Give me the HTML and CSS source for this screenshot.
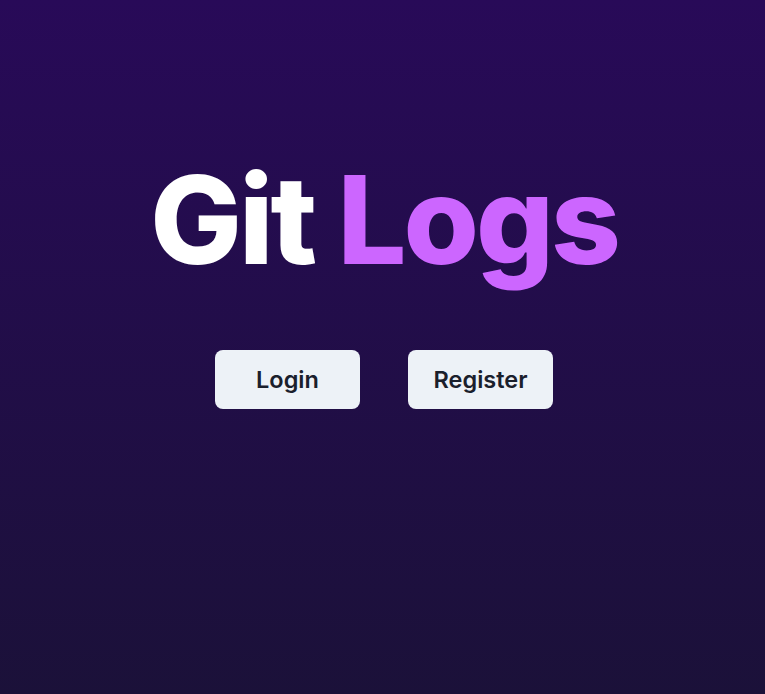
FILE: index.html
```html
<!DOCTYPE html>
<html lang="en">
<head>
<meta charset="utf-8">
<title>Git Logs</title>
<link rel="stylesheet" href="styles.css">
</head>
<body>
<main class="page">
  <h1 class="title">Git <span class="accent">Logs</span></h1>
  <div class="actions">
    <button class="btn">Login</button>
    <button class="btn">Register</button>
  </div>
</main>
</body>
</html>
```
FILE: styles.css
```css
* { box-sizing: border-box; }
html, body { margin: 0; height: 100%; }
body {
  font-family: Inter, "Noto Sans", sans-serif;
  background: linear-gradient(to bottom, #280a58, #1b1139);
  min-height: 694px;
}
.page {
  display: flex;
  flex-direction: column;
  align-items: center;
  padding-top: 150px;
  padding-left: 3px;
}
.title {
  margin: 0;
  font-size: 122px;
  font-weight: 800;
  letter-spacing: -0.025em;
  line-height: 1.15;
  color: #ffffff;
}
.accent { color: #cc66ff; }
.actions {
  display: flex;
  gap: 48px;
  margin-top: 60px;
}
.btn {
  width: 145px;
  height: 59px;
  border: none;
  border-radius: 8px;
  background: #edf2f7;
  color: #1a202c;
  font-family: Inter, sans-serif;
  font-size: 23.5px;
  font-weight: 600;
}
```
